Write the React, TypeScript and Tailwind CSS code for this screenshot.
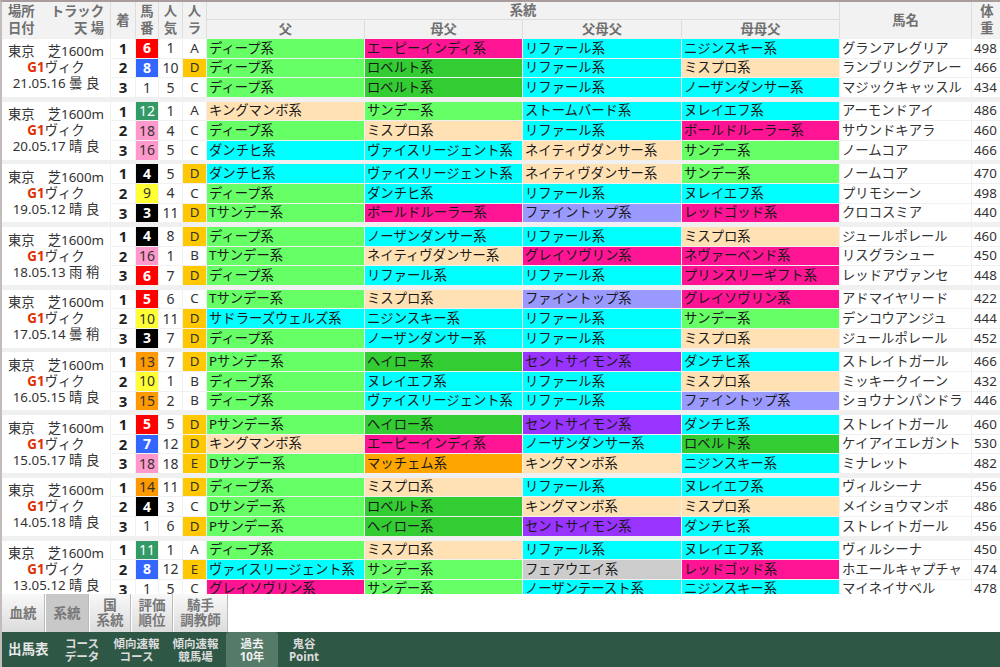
const F: Record<string, string> = {
  g: "bg-[#66ff66]",
  c: "bg-[#00ffff]",
  m: "bg-[#ffe1b3]",
  p: "bg-[#ff1493]",
  d: "bg-[#33cc33]",
  v: "bg-[#9933ff]",
  b: "bg-[#9999ff]",
  o: "bg-[#ffa500]",
  s: "bg-[#cccccc]",
};
const N: Record<string, string> = {
  w: "bg-white text-[#333333]",
  r: "bg-[#ff0000] text-white font-bold",
  u: "bg-[#3366ff] text-white font-bold",
  k: "bg-black text-white font-bold",
  e: "bg-[#339966] text-white",
  y: "bg-[#ffff33] text-[#333333]",
  a: "bg-[#ff9900] text-[#333333]",
  i: "bg-[#ff99cc] text-[#333333]",
};
type Row = [string, string, string, string, [string, string], [string, string], [string, string], [string, string], string, string];
type Block = { date: string; rows: Row[] };
const D: [string, string] = ["ディープ系", "g"];
const ms: [string, string] = ["ミスプロ系", "m"];
const rf: [string, string] = ["リファール系", "c"];
const ns: [string, string] = ["ノーザンダンサー系", "c"];
const rb: [string, string] = ["ロベルト系", "d"];
const sd: [string, string] = ["サンデー系", "g"];
const dc: [string, string] = ["ダンチヒ系", "c"];
const nu: [string, string] = ["ヌレイエフ系", "c"];
const nj: [string, string] = ["ニジンスキー系", "c"];
const vr: [string, string] = ["ヴァイスリージェント系", "c"];
const nt: [string, string] = ["ネイティヴダンサー系", "m"];
const km: [string, string] = ["キングマンボ系", "m"];
const ap: [string, string] = ["エーピーインディ系", "p"];
const bd: [string, string] = ["ボールドルーラー系", "p"];
const rg: [string, string] = ["レッドゴッド系", "p"];
const gs: [string, string] = ["グレイソヴリン系", "p"];
const ft: [string, string] = ["ファイントップ系", "b"];
const hl: [string, string] = ["ヘイロー系", "d"];
const ss: [string, string] = ["セントサイモン系", "v"];
const ts: [string, string] = ["Tサンデー系", "g"];
const ps: [string, string] = ["Pサンデー系", "g"];
const ds: [string, string] = ["Dサンデー系", "g"];

const blocks: Block[] = [
  { date: "21.05.16 曇 良", rows: [
    ["6", "r", "1", "A", D, ap, rf, nj, "グランアレグリア", "498"],
    ["8", "u", "10", "D", D, rb, rf, ms, "ランブリングアレー", "466"],
    ["1", "w", "5", "C", D, rb, rf, ns, "マジックキャッスル", "434"],
  ]},
  { date: "20.05.17 晴 良", rows: [
    ["12", "e", "1", "A", km, sd, ["ストームバード系", "c"], nu, "アーモンドアイ", "486"],
    ["18", "i", "4", "C", D, ms, rf, bd, "サウンドキアラ", "460"],
    ["16", "i", "5", "C", dc, vr, nt, sd, "ノームコア", "466"],
  ]},
  { date: "19.05.12 晴 良", rows: [
    ["4", "k", "5", "D", dc, vr, nt, sd, "ノームコア", "470"],
    ["9", "y", "4", "C", D, dc, rf, nu, "プリモシーン", "498"],
    ["3", "k", "11", "D", ts, bd, ft, rg, "クロコスミア", "440"],
  ]},
  { date: "18.05.13 雨 稍", rows: [
    ["4", "k", "8", "D", D, ns, rf, ms, "ジュールポレール", "460"],
    ["16", "i", "1", "B", ts, nt, gs, ["ネヴァーベンド系", "p"], "リスグラシュー", "450"],
    ["6", "r", "7", "D", D, rf, rf, ["プリンスリーギフト系", "p"], "レッドアヴァンセ", "448"],
  ]},
  { date: "17.05.14 曇 稍", rows: [
    ["5", "r", "6", "C", ts, ms, ft, gs, "アドマイヤリード", "422"],
    ["10", "y", "11", "D", ["サドラーズウェルズ系", "c"], nj, rf, sd, "デンコウアンジュ", "444"],
    ["3", "k", "7", "D", D, ns, rf, ms, "ジュールポレール", "452"],
  ]},
  { date: "16.05.15 晴 良", rows: [
    ["13", "a", "7", "D", ps, hl, ss, dc, "ストレイトガール", "466"],
    ["10", "y", "1", "B", D, nu, rf, ms, "ミッキークイーン", "432"],
    ["15", "a", "2", "B", D, vr, rf, ft, "ショウナンパンドラ", "446"],
  ]},
  { date: "15.05.17 晴 良", rows: [
    ["5", "r", "5", "D", ps, hl, ss, dc, "ストレイトガール", "460"],
    ["7", "u", "12", "D", km, ap, ns, rb, "ケイアイエレガント", "530"],
    ["18", "i", "18", "E", ds, ["マッチェム系", "o"], km, nj, "ミナレット", "482"],
  ]},
  { date: "14.05.18 晴 良", rows: [
    ["14", "a", "11", "D", D, ms, rf, nu, "ヴィルシーナ", "456"],
    ["4", "k", "3", "C", ds, rb, km, ms, "メイショウマンボ", "486"],
    ["1", "w", "6", "D", ps, hl, ss, dc, "ストレイトガール", "456"],
  ]},
  { date: "13.05.12 晴 良", rows: [
    ["11", "e", "1", "A", D, ms, rf, nu, "ヴィルシーナ", "450"],
    ["8", "u", "12", "E", vr, sd, ["フェアウエイ系", "s"], rg, "ホエールキャプチャ", "474"],
    ["1", "w", "5", "C", gs, sd, ["ノーザンテースト系", "c"], nj, "マイネイサベル", "478"],
  ]},
];

const cols = "grid grid-cols-[108px_24px_22px_23px_23px_157px_157px_158px_157px_131px_30px] gap-x-px";
const H = "bg-[#f2f2f2] text-[#707070] font-bold flex items-center justify-center text-center leading-[17px]";

function Cell({ v }: { v: [string, string] }) {
  return <div className={`${F[v[1]]} flex items-center pl-[2px] overflow-hidden whitespace-nowrap text-[#1a1a1a]`}>{v[0]}</div>;
}

function Rows({ b }: { b: Block }) {
  return (
    <div className={`${cols} grid-rows-3 gap-y-px h-[58px] mb-[4.7px] text-[13.33px] leading-none`}>
      <div className="row-span-3 bg-white text-[#333333] flex flex-col items-center justify-center leading-[16px] pb-[1px]">
        <div className="w-full flex justify-between px-[6px]"><span>東京</span><span>芝1600m</span></div>
        <div><span className="text-[#e03000] font-bold">G1</span>ヴィク</div>
        <div>{b.date}</div>
      </div>
      {b.rows.map((r, i) => (
        <div key={r[8] + r[0]} className="contents">
          <div className="bg-white flex items-center justify-center font-bold text-[15px] text-[#222222]">{i + 1}</div>
          <div className={`${N[r[1]]} flex items-center justify-center text-[14px]`}>{r[0]}</div>
          <div className="bg-white flex items-center justify-center text-[14px] text-[#333333]">{r[2]}</div>
          <div className={`${r[3] === "D" || r[3] === "E" ? "bg-[#ffc800]" : "bg-white"} flex items-center justify-center text-[#333333]`}>{r[3]}</div>
          <Cell v={r[4]} />
          <Cell v={r[5]} />
          <Cell v={r[6]} />
          <Cell v={r[7]} />
          <div className="bg-white flex items-center pl-[2px] overflow-hidden whitespace-nowrap text-[#333333]">{r[8]}</div>
          <div className="bg-white flex items-center pl-[2px] overflow-hidden text-[#333333]">{r[9]}</div>
        </div>
      ))}
    </div>
  );
}

const tabs = [
  { t: ["血統"], w: "w-[43px]" },
  { t: ["系統"], w: "w-[43px]", on: true },
  { t: ["国", "系統"], w: "w-[41px]" },
  { t: ["評価", "順位"], w: "w-[41px]" },
  { t: ["騎手", "調教師"], w: "w-[54px]" },
];
const foot = [
  { t: ["コース", "データ"], w: "w-[50px]" },
  { t: ["傾向速報", "コース"], w: "w-[59px]" },
  { t: ["傾向速報", "競馬場"], w: "w-[59px]" },
  { t: ["過去", "10年"], w: "w-[52px] ml-px bg-[#557a68] rounded-t-[3px] text-[#f0f0f0]" },
  { t: ["鬼谷", "Point"], w: "w-[52px]" },
];

export default function App() {
  return (
    <div className="w-[1000px] h-[667px] flex flex-col overflow-hidden bg-white border-t-2 border-t-[#a89c9c] border-l-2 border-l-[#c4bcbc] font-['Noto_Sans','Noto_Sans_CJK_JP',sans-serif]">
      <div className="h-[592px] overflow-hidden bg-[#f0f0f0]">
        <div className={`${cols} grid-rows-[17px_18px] gap-y-px h-[36px] mb-px bg-[#dddddd] text-[13.33px]`}>
          <div className={`${H} row-span-2 flex-col !items-stretch px-[6px]`}>
            <div className="flex justify-between"><span>場所</span><span>トラック</span></div>
            <div className="flex justify-between"><span>日付</span><span>天 場</span></div>
          </div>
          <div className={`${H} row-span-2`}>着</div>
          <div className={`${H} row-span-2`}>馬<br />番</div>
          <div className={`${H} row-span-2`}>人<br />気</div>
          <div className={`${H} row-span-2`}>人<br />ラ</div>
          <div className={`${H} col-span-4`}>系統</div>
          <div className={`${H} row-span-2`}>馬名</div>
          <div className={`${H} row-span-2`}>体<br />重</div>
          <div className={H}>父</div>
          <div className={H}>母父</div>
          <div className={H}>父母父</div>
          <div className={H}>母母父</div>
        </div>
        {blocks.map((b) => <Rows key={b.date} b={b} />)}
      </div>
      <div className="h-[38px] flex bg-white gap-px">
        {tabs.map((t) => (
          <div key={t.t.join("")} className={`${t.w} ${t.on ? "bg-[#c8c8c8]" : "bg-gradient-to-b from-[#f8f8f8] to-[#dcdcdc]"} border-r border-r-[#bbbbbb] flex flex-col items-center justify-center text-[13.5px] leading-[15px] font-bold text-[#777777]`}>
            {t.t.map((s) => <span key={s}>{s}</span>)}
          </div>
        ))}
      </div>
      <div className="h-[35px] bg-[#2f5745] flex items-stretch text-[#dcdcdc] font-bold">
        <div className="w-[55px] pl-[6px] flex items-center text-[13.5px] text-[#e8e8e8]">出馬表</div>
        {foot.map((t) => (
          <div key={t.t.join("")} className={`${t.w} flex flex-col items-center justify-center text-[11.5px] leading-[13px]`}>
            {t.t.map((s) => <span key={s}>{s}</span>)}
          </div>
        ))}
      </div>
    </div>
  );
}
